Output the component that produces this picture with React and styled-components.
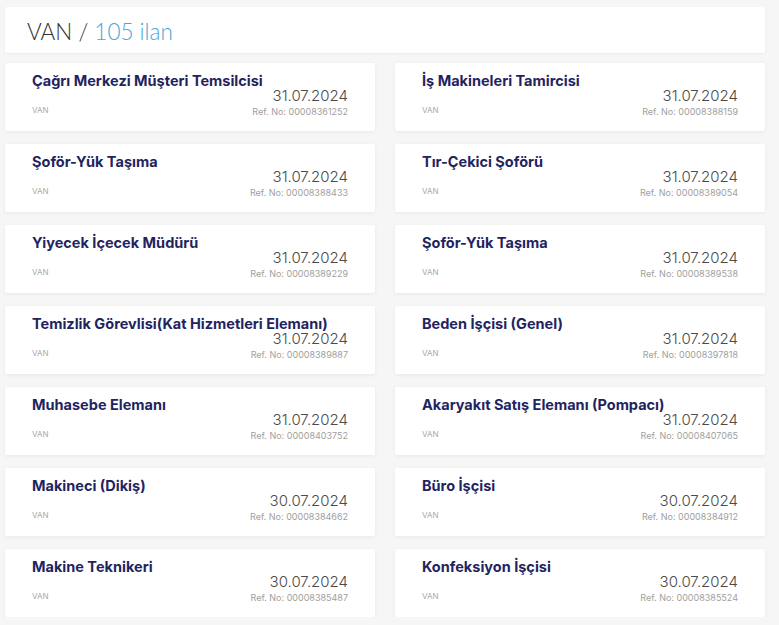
import React from "react";
import styled, { createGlobalStyle } from "styled-components";

const Global = createGlobalStyle`
  html, body { margin: 0; padding: 0; background: #f6f6f6; }
  body { font-family: Inter, "Open Sans", "Liberation Sans", sans-serif; }
`;

const Page = styled.div`
  width: 760px;
  padding: 7px 0 0 5px;
`;

const Header = styled.div`
  box-sizing: border-box;
  height: 46px;
  padding: 3px 22px 0;
  background: #fff;
  box-shadow: 0 1px 3px rgba(0, 0, 0, 0.05);
  border-radius: 2px;
  font-family: Lato, Inter, sans-serif;
  font-size: 22.5px;
  font-weight: 300;
  line-height: 44px;
  color: #333;
`;

const Count = styled.span`
  color: #4aa6d9;
`;

const Grid = styled.div`
  margin-top: 10px;
  display: grid;
  grid-template-columns: 370px 370px;
  column-gap: 20px;
  grid-auto-rows: 68px;
  row-gap: 13px;
`;

const Card = styled.div`
  box-sizing: border-box;
  background: #fff;
  border-radius: 2px;
  box-shadow: 0 1px 4px rgba(0, 0, 0, 0.06);
  padding: 11px 27px 0;
  display: grid;
  grid-template-columns: 1fr auto;
  grid-template-rows: 14px auto;
  align-content: start;
`;

const Title = styled.div`
  grid-column: 1 / span 2;
  font-size: 14.5px;
  line-height: 14px;
  font-weight: 700;
  color: #1f2460;
  white-space: nowrap;
`;

const Location = styled.div`
  align-self: start;
  margin-top: 16px;
  font-size: 8px;
  line-height: 12px;
  color: #a8a8a8;
`;

const Right = styled.div`
  text-align: right;
`;

const DateText = styled.div`
  font-size: 15px;
  line-height: 16px;
  font-weight: 300;
  color: #4a4a4a;
`;

const Ref = styled.div`
  margin-top: 2px;
  font-size: 9px;
  line-height: 12px;
  color: #a0a0a0;
`;

const jobs = [
  ["Çağrı Merkezi Müşteri Temsilcisi", "31.07.2024", "00008361252"],
  ["İş Makineleri Tamircisi", "31.07.2024", "00008388159"],
  ["Şoför-Yük Taşıma", "31.07.2024", "00008388433"],
  ["Tır-Çekici Şoförü", "31.07.2024", "00008389054"],
  ["Yiyecek İçecek Müdürü", "31.07.2024", "00008389229"],
  ["Şoför-Yük Taşıma", "31.07.2024", "00008389538"],
  ["Temizlik Görevlisi(Kat Hizmetleri Elemanı)", "31.07.2024", "00008389887"],
  ["Beden İşçisi (Genel)", "31.07.2024", "00008397818"],
  ["Muhasebe Elemanı", "31.07.2024", "00008403752"],
  ["Akaryakıt Satış Elemanı (Pompacı)", "31.07.2024", "00008407065"],
  ["Makineci (Dikiş)", "30.07.2024", "00008384662"],
  ["Büro İşçisi", "30.07.2024", "00008384912"],
  ["Makine Teknikeri", "30.07.2024", "00008385487"],
  ["Konfeksiyon İşçisi", "30.07.2024", "00008385524"],
];

export default function App() {
  return (
    <Page>
      <Global />
      <Header>
        VAN / <Count>105 ilan</Count>
      </Header>
      <Grid>
        {jobs.map(([t, d, r], i) => (
          <Card key={i}>
            <Title>{t}</Title>
            <Location>VAN</Location>
            <Right>
              <DateText>{d}</DateText>
              <Ref>Ref. No: {r}</Ref>
            </Right>
          </Card>
        ))}
      </Grid>
    </Page>
  );
}
